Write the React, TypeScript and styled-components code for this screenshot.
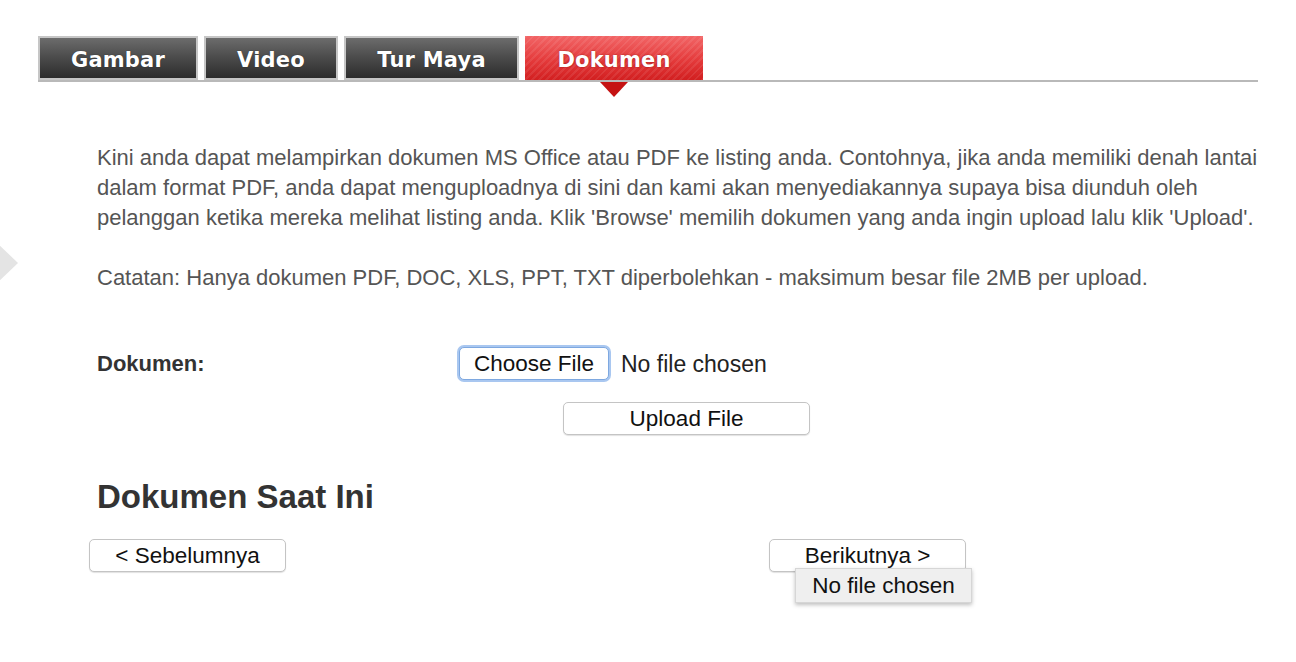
import React from "react";
import styled, { createGlobalStyle, css } from "styled-components";

const GlobalStyle = createGlobalStyle`
  html, body { margin: 0; padding: 0; background: #ffffff; }
  body { font-family: "Liberation Sans", Arial, sans-serif; }
`;

const Page = styled.div`
  position: relative;
  width: 1296px;
  height: 662px;
  overflow: hidden;
  background: #fff;
  padding: 36px 0 0 38px;
  box-sizing: border-box;
`;

const SideArrow = styled.div`
  position: absolute;
  left: -6px;
  top: 240px;
  width: 0;
  height: 0;
  border-top: 23px solid transparent;
  border-bottom: 23px solid transparent;
  border-left: 24px solid #e4e4e4;
`;

const TabBar = styled.div`
  display: flex;
  gap: 6px;
  width: 1220px;
  border-bottom: 2px solid #b9b9b9;
  box-sizing: border-box;
`;

const Tab = styled.div<{ $w: number; $active?: boolean }>`
  position: relative;
  width: ${(p) => p.$w}px;
  height: 44px;
  box-sizing: border-box;
  display: flex;
  align-items: center;
  justify-content: center;
  padding-top: 3px;
  font-family: "DejaVu Sans", Verdana, sans-serif;
  font-weight: bold;
  font-size: 21px;
  letter-spacing: 0.2px;
  color: #fff;
  text-shadow: 0 0 1px rgba(0, 0, 0, 0.6);
  ${(p) =>
    p.$active
      ? css`
          border: none;
          background:
            repeating-linear-gradient(
              135deg,
              rgba(255, 255, 255, 0.08) 0 2px,
              rgba(255, 255, 255, 0) 2px 5px
            ),
            linear-gradient(#f26566, #e43a3b 55%, #d21f20);
          text-shadow: 0 0 2px rgba(120, 0, 0, 0.7);
          &::after {
            content: "";
            position: absolute;
            left: 50%;
            bottom: -17px;
            margin-left: -14px;
            border-left: 14px solid transparent;
            border-right: 14px solid transparent;
            border-top: 15px solid #c51212;
          }
        `
      : css`
          border: 2px solid #c6c6c6;
          background: linear-gradient(#6c6c6c, #4a4a4a 50%, #2c2c2c);
        `}
`;

const Content = styled.div`
  padding: 61px 0 0 59px;
  width: 1232px;
  box-sizing: border-box;
  color: #555;
  font-size: 22px;
  line-height: 30px;
`;

const Para = styled.p`
  margin: 0 0 30px 0;
`;

const FormRow = styled.div`
  display: flex;
  align-items: center;
  margin-top: 54px;
`;

const Label = styled.div`
  width: 362px;
  font-weight: bold;
  color: #333;
  font-size: 22px;
`;

const FileButton = styled.button<{ $focus?: boolean; $w: number }>`
  width: ${(p) => p.$w}px;
  height: 33px;
  box-sizing: border-box;
  font-family: "Liberation Sans", Arial, sans-serif;
  font-size: 22.5px;
  color: #111;
  background: #fff;
  border-radius: 5px;
  padding: 0;
  white-space: nowrap;
  ${(p) =>
    p.$focus
      ? css`
          border: 1px solid #7ea8e0;
          box-shadow: 0 0 0 2px #a9c7f0;
        `
      : css`
          border: 1px solid #c4c4c4;
          box-shadow: 0 1px 1px rgba(0, 0, 0, 0.12);
        `}
`;

const FileStatus = styled.span`
  margin-left: 12px;
  font-size: 23px;
  color: #222;
`;

const UploadRow = styled.div`
  display: flex;
  padding-left: 466px;
  margin-top: 22px;
`;

const Heading = styled.h2`
  margin: 44px 0 0 0;
  font-size: 33px;
  font-weight: bold;
  color: #333;
  line-height: 36px;
`;

const NavRow = styled.div`
  display: flex;
  justify-content: space-between;
  width: 877px;
  margin: 24px 0 0 -8px;
`;

const NavWrap = styled.div`
  position: relative;
`;

const Tooltip = styled.div`
  position: absolute;
  left: 26px;
  top: 29px;
  width: 177px;
  height: 35px;
  box-sizing: border-box;
  background: #efefef;
  border: 1px solid #d6d6d6;
  box-shadow: 0 2px 4px rgba(0, 0, 0, 0.25);
  font-size: 22.5px;
  color: #111;
  display: flex;
  align-items: center;
  justify-content: center;
  white-space: nowrap;
`;

export default function App() {
  return (
    <>
      <GlobalStyle />
      <Page>
        <SideArrow />
        <TabBar>
          <Tab $w={160}>Gambar</Tab>
          <Tab $w={134}>Video</Tab>
          <Tab $w={175}>Tur Maya</Tab>
          <Tab $w={178} $active>
            Dokumen
          </Tab>
        </TabBar>
        <Content>
          <Para>
            Kini anda dapat melampirkan dokumen MS Office atau PDF ke listing anda. Contohnya, jika anda
            memiliki denah lantai dalam format PDF, anda dapat menguploadnya di sini dan kami akan
            menyediakannya supaya bisa diunduh oleh pelanggan ketika mereka melihat listing anda. Klik
            'Browse' memilih dokumen yang anda ingin upload lalu klik 'Upload'.
          </Para>
          <Para>
            Catatan: Hanya dokumen PDF, DOC, XLS, PPT, TXT diperbolehkan - maksimum besar file 2MB per
            upload.
          </Para>
          <FormRow>
            <Label>Dokumen:</Label>
            <FileButton $w={150} $focus>
              Choose File
            </FileButton>
            <FileStatus>No file chosen</FileStatus>
          </FormRow>
          <UploadRow>
            <FileButton $w={247}>Upload File</FileButton>
          </UploadRow>
          <Heading>Dokumen Saat Ini</Heading>
          <NavRow>
            <FileButton $w={197}>&lt; Sebelumnya</FileButton>
            <NavWrap>
              <FileButton $w={197}>Berikutnya &gt;</FileButton>
              <Tooltip>No file chosen</Tooltip>
            </NavWrap>
          </NavRow>
        </Content>
      </Page>
    </>
  );
}
